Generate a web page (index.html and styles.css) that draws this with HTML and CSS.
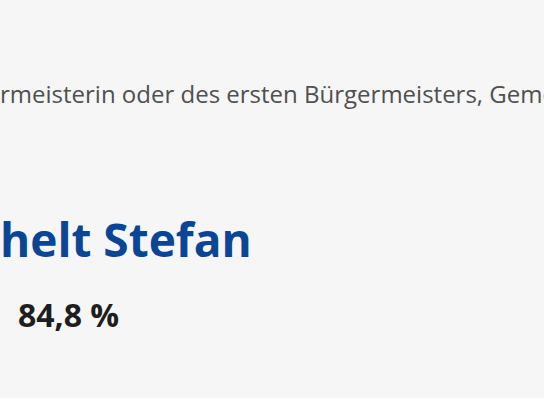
FILE: index.html
```html
<!DOCTYPE html>
<html lang="de">
<head>
<meta charset="utf-8">
<title>Wahlergebnis</title>
<link rel="stylesheet" href="styles.css">
</head>
<body>
<main class="panel">
  <p class="election">rmeisterin oder des ersten Bürgermeisters, Gemeinde</p>
  <h1 class="winner">helt Stefan</h1>
  <div class="result">84,8 %</div>
</main>
</body>
</html>
```
FILE: styles.css
```css
html, body {
  margin: 0;
  padding: 0;
  background: #ffffff;
}
.panel {
  height: 398px;
  background: #f6f6f6;
  overflow: hidden;
  font-family: "Open Sans", "Noto Sans", sans-serif;
  display: flex;
  flex-direction: column;
}
.election {
  margin: 0;
  padding-top: 80px;
  font-size: 24px;
  line-height: 28px;
  color: #505050;
  white-space: nowrap;
}
.winner {
  margin: 0;
  padding-top: 103px;
  font-size: 46px;
  line-height: 56px;
  font-weight: 700;
  color: #0b4596;
  white-space: nowrap;
}
.result {
  padding-top: 28px;
  padding-left: 18px;
  font-size: 32px;
  line-height: 40px;
  font-weight: 700;
  color: #1e1e1e;
}
```
